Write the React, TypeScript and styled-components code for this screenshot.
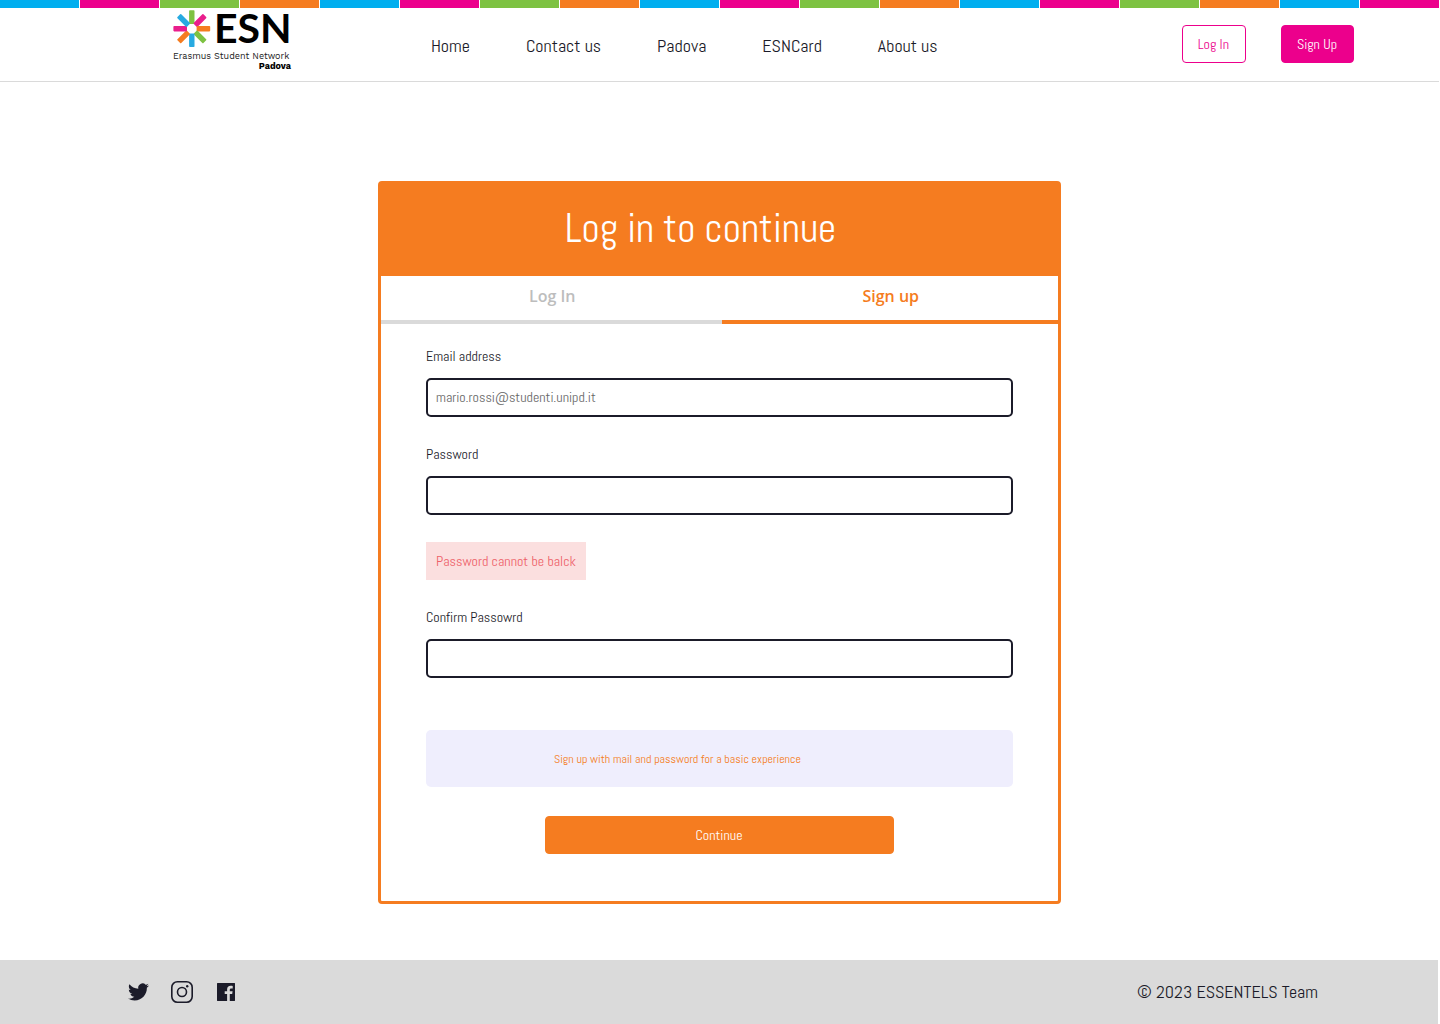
import React from "react";
import styled, { createGlobalStyle } from "styled-components";

const ink = "#1b1b29";
const orange = "#f57c20";
const pink = "#ec008c";
const green = "#7dc242";
const blue = "#00aeef";
const grey = "#dadada";
const narrow = `"Abel", "Liberation Sans Narrow", "Roboto Condensed", Roboto, sans-serif`;
const logoFont = `"Work Sans", Inter, sans-serif`;

const GlobalStyle = createGlobalStyle`
  *, *::before, *::after { box-sizing: border-box; }
  body { margin: 0; background: #fff; color: ${ink}; font-family: ${narrow}; }
  button, input { font-family: inherit; }
`;

const Page = styled.div`
  display: flex;
  flex-direction: column;
  min-height: 100vh;
`;

const Stripes = styled.div`
  display: grid;
  grid-template-columns: repeat(18, 1fr);
  height: 8px;
`;

const Stripe = styled.span<{ $color: string }>`
  background: ${(p) => p.$color};
  border-right: 1px solid #fff;
`;

const Header = styled.header`
  display: flex;
  align-items: flex-start;
  height: 74px;
  margin-right: 1px;
  padding: 0 85px 0 173px;
  border-bottom: 1px solid ${grey};
`;

const LogoLink = styled.a`
  display: block;
  margin-right: 136px;
  padding-top: 2px;
  svg { display: block; overflow: visible; }
`;

const Nav = styled.nav`
  display: flex;
  gap: 56px;
  padding-top: 26px;
`;

const NavLink = styled.a`
  color: ${ink};
  font-size: 18px;
  line-height: 24px;
  text-decoration: none;
  white-space: nowrap;
`;

const Actions = styled.div`
  display: flex;
  gap: 35px;
  margin-left: auto;
  padding-top: 17px;
`;

const Button = styled.button<{ $tone: "outline" | "pink" | "orange" }>`
  height: 38px;
  padding: 0 16px 0 15px;
  border: 1px solid ${(p) => (p.$tone === "orange" ? orange : pink)};
  border-radius: 4px;
  background: ${(p) => (p.$tone === "outline" ? "#fff" : p.$tone === "pink" ? pink : orange)};
  color: ${(p) => (p.$tone === "outline" ? pink : "#fff")};
  font-size: 14px;
  line-height: 20px;
  white-space: nowrap;
  cursor: pointer;
`;

const Main = styled.main`
  display: flex;
  flex: 1;
  justify-content: center;
  align-items: flex-start;
  padding: 99px 1px 56px 0;
`;

const Card = styled.section`
  width: 100%;
  max-width: 683px;
  border: 3px solid ${orange};
  border-radius: 4px;
  background: #fff;
`;

const CardHeader = styled.div`
  padding: 19px 38px 21px 0;
  background: ${orange};
  text-align: center;
`;

const Title = styled.h1`
  margin: 0;
  color: #fff;
  font-size: 40px;
  font-weight: 400;
  line-height: 52px;
`;

const Tabs = styled.div`
  display: grid;
  grid-template-columns: 340fr 336fr;
`;

const Tab = styled.button<{ $active?: boolean }>`
  height: 48px;
  padding: 0 0 4px 2px;
  border: 0;
  border-bottom: 4px solid ${(p) => (p.$active ? orange : grey)};
  background: none;
  color: ${(p) => (p.$active ? orange : "#bdbdbd")};
  font-family: "Open Sans", sans-serif;
  font-size: 16px;
  font-weight: 600;
  line-height: 24px;
  cursor: pointer;
`;

const Form = styled.form`
  display: flex;
  flex-direction: column;
  gap: 27px;
  padding: 22px 45px 47px;
`;

const Field = styled.div`
  display: flex;
  flex-direction: column;
  gap: 12px;
`;

const Label = styled.label`
  font-size: 14px;
  line-height: 20px;
`;

const Input = styled.input`
  width: 100%;
  height: 39px;
  padding: 0 8px 2px;
  border: 2px solid ${ink};
  border-radius: 5px;
  background: #fff;
  color: ${ink};
  font-size: 14px;
  &::placeholder { color: #666; opacity: 1; }
`;

const ErrorNote = styled.p`
  align-self: flex-start;
  margin: 0;
  padding: 9px 10px;
  background: #fbdfdf;
  color: #ee6068;
  font-size: 14px;
  line-height: 20px;
`;

const Submit = styled.div`
  display: flex;
  flex-direction: column;
  align-items: center;
  gap: 29px;
  padding-top: 25px;
  ${Button} { width: 100%; max-width: 349px; }
`;

const Info = styled.p`
  width: 100%;
  margin: 0;
  padding: 21px 84px 20px 0;
  border-radius: 5px;
  background: #efeefd;
  color: ${orange};
  font-size: 12px;
  line-height: 16px;
  text-align: center;
`;

const Footer = styled.footer`
  display: flex;
  align-items: center;
  justify-content: space-between;
  height: 64px;
  margin-right: 2px;
  padding: 0 120px 0 128px;
  background: ${grey};
`;

const Social = styled.div`
  display: flex;
  align-items: center;
  gap: 20px;
`;

const SocialLink = styled.a`
  display: block;
  color: ${ink};
  svg { display: block; }
`;

const Copyright = styled.span`
  font-size: 18px;
  line-height: 24px;
`;

const stripeColors = [blue, pink, green, orange];
const rays = [green, "#e91e8c", orange, green, "#27aae1", orange, "#e91e8c", "#27aae1"];

function Logo() {
  return (
    <svg width="122" height="64" viewBox="0 0 122 64" role="img" aria-label="ESN Padova">
      {rays.map((color, i) => (
        <rect key={i} x="16.1" y="0.3" width="5.4" height="13.6" rx="0.8" fill={color} transform={`rotate(${i * 45} 18.8 18.7)`} />
      ))}
      <text x="41" y="33" fontFamily="Lato, sans-serif" fontSize="41" fontWeight="700" fill="#000">ESN</text>
      <text x="0" y="49" fontFamily={logoFont} fontSize="9" fill="#222">Erasmus Student Network</text>
      <text x="118" y="59" textAnchor="end" fontFamily={logoFont} fontSize="9" fontWeight="700" fill="#000">Padova</text>
    </svg>
  );
}

function TwitterIcon() {
  return (
    <svg width="21" height="22" viewBox="0 0 24 24" fill="currentColor" aria-hidden="true">
      <path d="M23.953 4.57a10 10 0 01-2.825.775 4.958 4.958 0 002.163-2.723c-.951.555-2.005.959-3.127 1.184a4.92 4.92 0 00-8.384 4.482C7.69 8.095 4.067 6.13 1.64 3.162a4.822 4.822 0 00-.666 2.475c0 1.71.87 3.213 2.188 4.096a4.904 4.904 0 01-2.228-.616v.06a4.923 4.923 0 003.946 4.827 4.996 4.996 0 01-2.212.085 4.936 4.936 0 004.604 3.417 9.867 9.867 0 01-6.102 2.105c-.39 0-.779-.023-1.17-.067a13.995 13.995 0 007.557 2.209c9.053 0 13.998-7.496 13.998-13.985 0-.21 0-.42-.015-.63A9.935 9.935 0 0024 4.59z" />
    </svg>
  );
}

function InstagramIcon() {
  return (
    <svg width="25" height="24" viewBox="0 0 25 24" fill="none" stroke="currentColor" aria-hidden="true">
      <rect x="2.8" y="1.8" width="20.4" height="20.4" rx="5.6" strokeWidth="1.6" />
      <circle cx="13" cy="12" r="4.5" strokeWidth="1.6" />
      <circle cx="18.2" cy="6.2" r="1.2" fill="currentColor" stroke="none" />
    </svg>
  );
}

function FacebookIcon() {
  return (
    <svg width="24" height="24" viewBox="0 0 24 24" fill="currentColor" aria-hidden="true">
      <path d="M3.4 3h17.2a.4.4 0 0 1 .4.4v17.2a.4.4 0 0 1-.4.4H15.8v-7h2.4l.4-2.7h-2.8V9.8c0-.8.3-1.4 1.4-1.4h1.5V5.9c-.3 0-1.1-.1-2.1-.1-2.1 0-3.5 1.3-3.5 3.6v1.900h-2.400V14h2.400v7H3.400a.4.4 0 0 1-.4-.4V3.400a.4.4 0 0 1 .4-.4z" />
    </svg>
  );
}

export default function App() {
  return (
    <Page>
      <GlobalStyle />
      <Stripes>
        {Array.from({ length: 18 }, (_, i) => (
          <Stripe key={i} $color={stripeColors[i % 4]} />
        ))}
      </Stripes>
      <Header>
        <LogoLink href="#"><Logo /></LogoLink>
        <Nav>
          {["Home", "Contact us", "Padova", "ESNCard", "About us"].map((item) => (
            <NavLink key={item} href="#">{item}</NavLink>
          ))}
        </Nav>
        <Actions>
          <Button type="button" $tone="outline">Log In</Button>
          <Button type="button" $tone="pink">Sign Up</Button>
        </Actions>
      </Header>
      <Main>
        <Card>
          <CardHeader><Title>Log in to continue</Title></CardHeader>
          <Tabs>
            <Tab type="button">Log In</Tab>
            <Tab type="button" $active>Sign up</Tab>
          </Tabs>
          <Form onSubmit={(e) => e.preventDefault()} noValidate>
            <Field>
              <Label htmlFor="email">Email address</Label>
              <Input id="email" type="email" placeholder="mario.rossi@studenti.unipd.it" />
            </Field>
            <Field>
              <Label htmlFor="password">Password</Label>
              <Input id="password" type="password" aria-describedby="password-error" />
            </Field>
            <ErrorNote id="password-error">Password cannot be balck</ErrorNote>
            <Field>
              <Label htmlFor="confirm">Confirm Passowrd</Label>
              <Input id="confirm" type="password" />
            </Field>
            <Submit>
              <Info>Sign up with mail and password for a basic experience</Info>
              <Button type="submit" $tone="orange">Continue</Button>
            </Submit>
          </Form>
        </Card>
      </Main>
      <Footer>
        <Social>
          <SocialLink href="#" aria-label="Twitter"><TwitterIcon /></SocialLink>
          <SocialLink href="#" aria-label="Instagram"><InstagramIcon /></SocialLink>
          <SocialLink href="#" aria-label="Facebook"><FacebookIcon /></SocialLink>
        </Social>
        <Copyright>© 2023 ESSENTELS Team</Copyright>
      </Footer>
    </Page>
  );
}
